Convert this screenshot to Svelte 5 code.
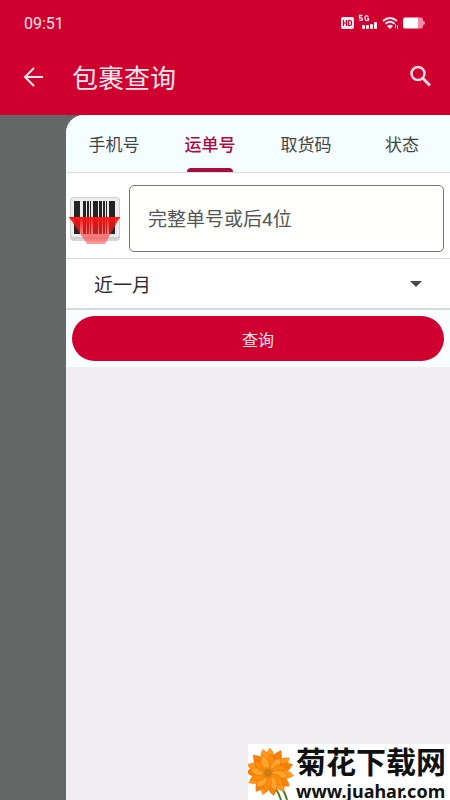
<script lang="ts">
	const tabs = ['手机号', '运单号', '取货码', '状态'];
	const ranges = ['近一月', '近三月', '近半年'];
	const outerPetals = Array.from({ length: 15 }, (_, i) => i * 24 + (i % 3) * 3);
	const innerPetals = Array.from({ length: 12 }, (_, i) => i * 30 + 9);

	let activeTab = $state(1);
	let range = $state('近一月');
	let keyword = $state('');
</script>

<div class="page">
	<header>
		<div class="status-bar">
			<span>09:51</span>
			<svg width="86" height="18" viewBox="0 0 86 18" fill="#ffe9ee" aria-hidden="true">
				<rect x="1" y="3" width="13" height="12" rx="2" />
				<path d="M3.500 6v6M6.500 6v6M3.500 9h3M8.500 6.500v5h1.500q1.500 0 1.500-1.500v-2q0-1.500-1.500-1.500z" fill="none" stroke="#cf0030" stroke-width="1.200" />
				<path d="M22.500 1.500h-3v2.500q3-.6 3 1.200 0 1.700-3.300 1.100M28.500 2.500q-3.500-2-3.500 1.500t3.500 2.200V4.500h-1.500" fill="none" stroke="#ffe9ee" stroke-width="1.300" />
				<rect x="22" y="11" width="3" height="4" rx="1" />
				<rect x="26" y="11" width="3" height="4" rx="1" />
				<rect x="30" y="10" width="3" height="5" rx="1" />
				<rect x="34" y="8" width="3" height="7" rx="1" />
				<path d="M43 7q7-6 14 0M45.500 9.700q4.500-4 9 0" fill="none" stroke="#ffe9ee" stroke-width="1.900" />
				<path d="M47 12q3-2.500 6 0l-3 3z" />
				<path d="M55.500 10v4M57.500 11v4" stroke="#ffe9ee" />
				<path d="M77 3.500h4a2 2 0 0 1 2 2v1l2 1.500v2l-2 1.500v1a2 2 0 0 1-2 2h-4z" fill="#f58aa4" />
				<path d="M65 3.500h13v11H65a2 2 0 0 1-2-2v-7a2 2 0 0 1 2-2z" fill="#fff" />
			</svg>
		</div>
		<div class="app-bar">
			<button class="icon-btn" aria-label="返回">
				<svg width="28" height="28" viewBox="0 0 28 28" fill="none" stroke="#ffe6ec" stroke-width="2">
					<path d="M23 14H6M14 5l-9 9 9 9" />
				</svg>
			</button>
			<h1>包裹查询</h1>
			<button class="icon-btn" aria-label="搜索">
				<svg width="28" height="28" viewBox="0 0 28 28" fill="none" stroke="#ffd9e2">
					<circle cx="12" cy="10.500" r="6.500" stroke-width="2.500" />
					<path d="M16.500 15l7.500 7.500" stroke-width="3" />
				</svg>
			</button>
		</div>
	</header>

	<main>
		<div class="panel">
			<nav class="tabs">
				{#each tabs as tab, i}
					<button class="tab" class:active={activeTab === i} onclick={() => (activeTab = i)}>
						{tab}
					</button>
				{/each}
			</nav>

			<div class="number-row">
				<button class="scan" aria-label="扫描条码">
					<svg width="52" height="50" viewBox="0 0 52 50">
						<defs>
							<linearGradient id="beam" x1="0" y1="0" x2="0" y2="1">
								<stop offset="0" stop-color="#ff0c0c" stop-opacity="0.95" />
								<stop offset="0.500" stop-color="#f22" stop-opacity="0.65" />
								<stop offset="1" stop-color="#f66" stop-opacity="0.65" />
							</linearGradient>
						</defs>
						<rect x="1" y="4" width="50" height="43" rx="4" fill="#999" opacity="0.4" />
						<rect x="1" y="3" width="50" height="42" rx="4" fill="#cfcfcf" />
						<rect x="2" y="4" width="48" height="39" rx="3" fill="#ededed" />
						<path d="M5 7h6v33H5zM14 7h3v33h-3zM18 7h2v33h-2zM21 7h1v33h-1zM24 7h5v33h-5zM30 7h3v33h-3zM34 7h2v33h-2zM37 7h1v33h-1zM40 7h6v33h-6z" fill="#242424" />
						<path d="M0 23h51L36 50H18z" fill="url(#beam)" />
						<path d="M0 23h51l-1 2H1z" fill="#ff1515" />
					</svg>
				</button>
				<input type="text" bind:value={keyword} placeholder="完整单号或后4位" aria-label="运单号" />
			</div>

			<div class="range-row">
				<select bind:value={range} aria-label="时间范围">
					{#each ranges as item}
						<option value={item}>{item}</option>
					{/each}
				</select>
				<svg class="caret" width="12" height="6" viewBox="0 0 12 6" aria-hidden="true">
					<path d="M0 0h12L6 6z" fill="#444" />
				</svg>
			</div>

			<div class="submit-row">
				<button class="submit">查询</button>
			</div>
		</div>
	</main>

	<aside class="watermark">
		<svg width="48" height="56" viewBox="0 0 48 56" aria-hidden="true">
			<path d="M26 42q5 7 7 14M32 42q5 6 7 14" fill="none" stroke="#557b2f" stroke-width="2" />
			{#each outerPetals as angle, i}
				<path
					d="M22 28Q15 14 19 8l3-4 3 4q4 6-3 20z"
					transform="rotate({angle} 22 28)"
					fill={i % 2 ? '#f8820a' : '#ff9a1c'}
					stroke="#e06504"
					stroke-width="0.3"
				/>
			{/each}
			{#each innerPetals as angle, i}
				<path
					d="M21 29q-6-9-3-15l3-4 3 4q3 6-3 15z"
					transform="rotate({angle} 21 29)"
					fill={i % 2 ? '#ffa52a' : '#fd8c0c'}
					stroke="#d96206"
					stroke-width="0.4"
				/>
			{/each}
			<circle cx="20" cy="29" r="6" fill="#d97808" />
			<circle cx="20" cy="29" r="5" fill="none" stroke="#f2a027" stroke-width="2" stroke-dasharray="1 1" />
			<circle cx="20" cy="28" r="3" fill="#cf7d12" />
		</svg>
		<div class="site">
			<strong>菊花下载网</strong>
			<span>www.juahar.com</span>
		</div>
	</aside>
</div>

<style>
	:global(body) {
		margin: 0;
	}

	.page {
		display: flex;
		flex-direction: column;
		position: relative;
		min-height: 100vh;
		font-family: Roboto, "Noto Sans CJK SC", sans-serif;
		background: #636867;
	}

	button,
	input,
	select {
		font-family: inherit;
		margin: 0;
		box-sizing: border-box;
	}

	button {
		padding: 0;
		border: none;
		background: none;
		cursor: pointer;
	}

	svg {
		display: block;
	}

	header {
		background: #cf0030;
		color: #ffe6ec;
	}

	.status-bar {
		display: flex;
		align-items: center;
		justify-content: space-between;
		height: 46px;
		padding: 0 24px;
		font-size: 16px;
	}

	.app-bar {
		display: flex;
		align-items: center;
		height: 62px;
		padding: 0 16px 7px 20px;
	}

	.icon-btn {
		flex-shrink: 0;
	}

	h1 {
		flex: 1;
		margin: 0 0 0 24px;
		padding-top: 3px;
		font-size: 26px;
		font-weight: 400;
		line-height: 36px;
	}

	main {
		display: flex;
		flex: 1;
		padding-left: 66px;
	}

	.panel {
		flex: 1;
		min-width: 0;
		background: #f1eef2;
		border-top-left-radius: 18px;
		overflow: hidden;
	}

	.tabs {
		display: grid;
		grid-template-columns: repeat(4, 1fr);
		background: #f5feff;
		border-bottom: 1px solid #e2dadd;
	}

	.tab {
		display: flex;
		flex-direction: column;
		align-items: center;
		height: 57px;
		padding-top: 18px;
		font-size: 17px;
		line-height: 24px;
		color: #444;
	}

	.tab::after {
		content: '';
		width: 46px;
		height: 4px;
		margin-top: 11px;
		border-radius: 4px 4px 0 0;
	}

	.tab.active {
		color: #b3083f;
		font-weight: 500;
	}

	.tab.active::after {
		background: #a50d40;
	}

	.number-row {
		display: flex;
		align-items: center;
		gap: 8px;
		padding: 12px 6px 6px 3px;
		background: #fff;
		border-bottom: 1px solid #d9dbdb;
	}

	.scan {
		flex-shrink: 0;
	}

	input {
		flex: 1;
		min-width: 0;
		height: 67px;
		padding: 2px 18px 0;
		border: 1px solid #77746f;
		border-radius: 5px;
		background: #fffffd;
		font-size: 19px;
		color: #333;
		outline: none;
	}

	input::placeholder {
		color: #555;
		opacity: 1;
	}

	.range-row {
		display: grid;
		align-items: center;
		background: #fff;
		border-bottom: 2px solid #d5dadb;
	}

	.range-row > * {
		grid-area: 1 / 1;
	}

	select {
		width: 100%;
		height: 49px;
		padding: 4px 28px 0 28px;
		border: none;
		background: transparent;
		appearance: none;
		font-size: 19px;
		color: #2b2b2b;
		outline: none;
	}

	.caret {
		justify-self: end;
		margin-right: 28px;
		pointer-events: none;
	}

	.submit-row {
		padding: 6px;
		background: #f8feff;
	}

	.submit {
		display: block;
		width: 100%;
		height: 45px;
		border-radius: 23px;
		background: #cf0030;
		font-size: 16px;
		color: #ffe6ec;
	}

	.watermark {
		display: flex;
		position: absolute;
		right: 0;
		bottom: 0;
		width: 202px;
		height: 56px;
		background: #fff;
		color: #111;
	}

	.watermark svg {
		flex-shrink: 0;
	}

	.site {
		display: flex;
		flex-direction: column;
		white-space: nowrap;
	}

	.site strong {
		font-size: 30px;
		font-weight: 700;
		line-height: 38px;
	}

	.site span {
		font-family: "Noto Sans", sans-serif;
		font-size: 18px;
		font-weight: 700;
		line-height: 18px;
	}
</style>
